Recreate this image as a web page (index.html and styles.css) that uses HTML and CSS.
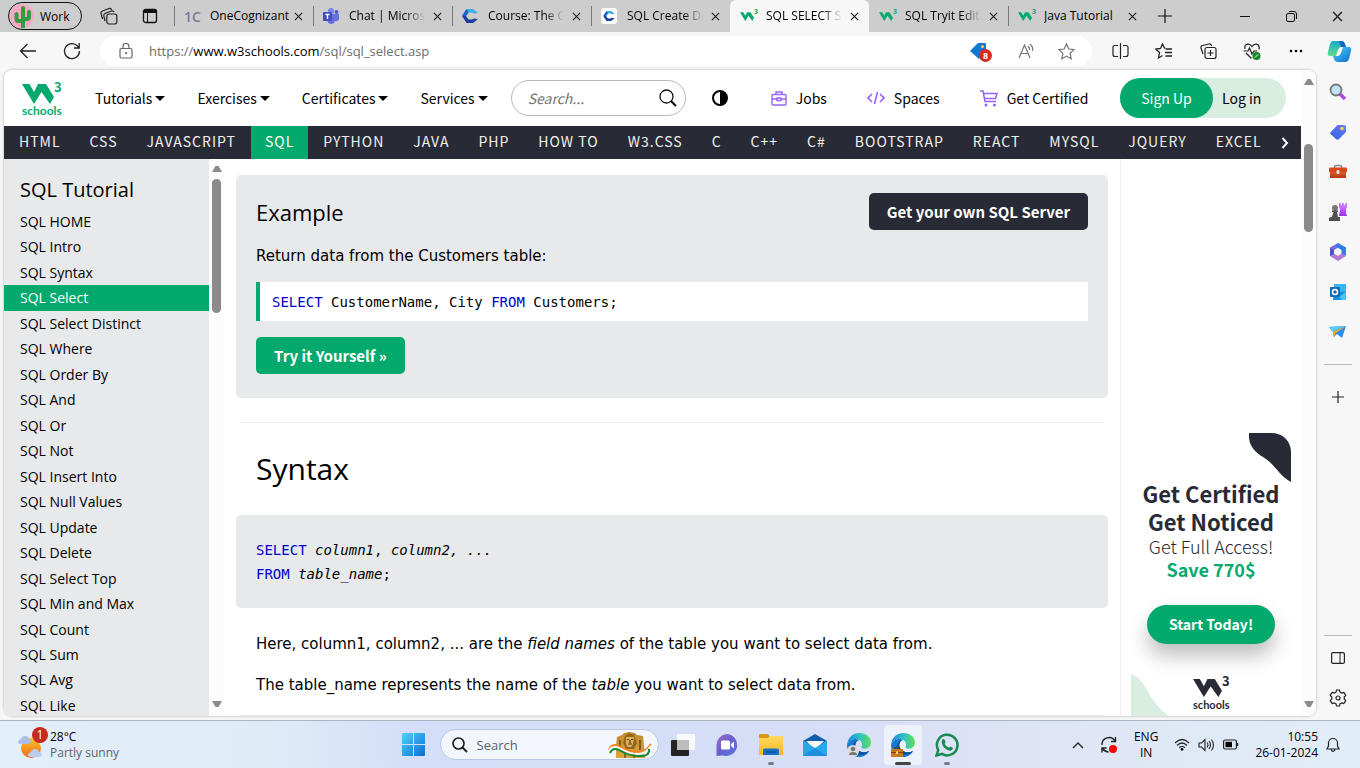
FILE: index.html
```html
<!DOCTYPE html>
<html lang="en">
<head>
<meta charset="utf-8">
<title>SQL SELECT Statement</title>
<link rel="stylesheet" href="styles.css">
</head>
<body>
<svg class="defs" aria-hidden="true">
  <defs>
    <linearGradient id="gBlue" x1="0" y1="0" x2="1" y2="1"><stop offset="0" stop-color="#4fd0ff"/><stop offset="1" stop-color="#0a6fd0"/></linearGradient>
    <linearGradient id="gEdge" x1="0" y1="0" x2="1" y2="0"><stop offset="0" stop-color="#1788d8"/><stop offset=".5" stop-color="#2cc0c8"/><stop offset="1" stop-color="#5fe05a"/></linearGradient>
    <linearGradient id="gPurple" x1="0" y1="0" x2="1" y2="1"><stop offset="0" stop-color="#9a6cc0"/><stop offset=".5" stop-color="#6a5fd0"/><stop offset="1" stop-color="#4f7fe0"/></linearGradient>
    <linearGradient id="gFolder" x1="0" y1="0" x2="0" y2="1"><stop offset="0" stop-color="#ffd95c"/><stop offset="1" stop-color="#f8b62a"/></linearGradient>
    <linearGradient id="gSun" x1="0" y1="0" x2="0" y2="1"><stop offset="0" stop-color="#fbc02d"/><stop offset="1" stop-color="#ef6c1a"/></linearGradient>
    <linearGradient id="gGold" x1="0" y1="0" x2="0" y2="1"><stop offset="0" stop-color="#c08a2c"/><stop offset="1" stop-color="#d9a93c"/></linearGradient>
    <linearGradient id="gTeal" x1="0" y1="0" x2="0" y2="1"><stop offset="0" stop-color="#17a8c9"/><stop offset="1" stop-color="#5fe08a"/></linearGradient>
    <linearGradient id="gTag" x1="0" y1="1" x2="1" y2="0"><stop offset="0" stop-color="#2f5fe0"/><stop offset="1" stop-color="#6d7dff"/></linearGradient>
    <linearGradient id="gViolet" x1="0" y1="0" x2="0" y2="1"><stop offset="0" stop-color="#d68cff"/><stop offset="1" stop-color="#a22ef5"/></linearGradient>
    <linearGradient id="gBox" x1="0" y1="0" x2="0" y2="1"><stop offset="0" stop-color="#e0592a"/><stop offset="1" stop-color="#b83814"/></linearGradient>
    <symbol id="w3mark" viewBox="0 0 32 20"><path d="M0 0H7.500L12 8 16 0H24L32 13 28 20 19.500 8 12 20Z"/></symbol>
    <symbol id="close" viewBox="0 0 10 10"><path d="M1 1 9 9M9 1 1 9" fill="none" stroke="#222" stroke-width="1.300"/></symbol>
    <symbol id="cogn" viewBox="0 0 16 14"><path d="M4.500 0H11L16 4 12 4.500 10 3.500H6.500L4 7 0 7Z" fill="#39b0e8"/><path d="M0 7H4L6.500 10.500H10L12 9.500 16 10 11 14H4.500Z" fill="#1d3f9c"/><path d="M0 7 4.500 0 6.500 3.500 4 7Z" fill="#1d5fc4"/></symbol>
    <symbol id="edge" viewBox="0 0 24 24"><path d="M0 12C1 4 6 0 12.500 0 19.500 0 24 4.500 24 9.500 24 14 20 16.500 16 15.500 13.500 15 15 13.500 15 11.500 15 8 12 6 8.500 6 4.500 6 1.500 8.500 0 12Z" fill="url(#gEdge)"/><path d="M0 12C1.500 8 5 6 8.500 6 10 6 11 6.300 12 7 8.500 8 7.500 12 9 15 11 19 17 20.500 22 18 20 22 16 24 12 24 5 24 0 18.500 0 12Z" fill="#1479cf"/><path d="M12 7C8.500 8 7.500 12 9 15 11 19 17 20.500 22 18 18 23 10 23 7 18 4 13 7 8 12 7Z" fill="#0c4f9b"/></symbol>
  </defs>
</svg>

<header class="tabstrip">
  <div class="strip-left">
    <button class="profile"><svg width="24" height="24" viewBox="0 0 24 24" aria-hidden="true"><circle cx="12" cy="12" r="12" fill="#f9a8c4"/><path d="M13 23V4M13 17H8Q6.500 17 6.500 15V10M13 15H17Q19 15 19 13V8" fill="none" stroke="#2f9e3f" stroke-width="4" stroke-linecap="round"/></svg>Work</button>
    <button class="plain" aria-label="Workspaces"><svg width="18" height="18" viewBox="0 0 18 18"><g fill="#cdcdcd" stroke="#222" stroke-width="1.200"><path d="M2.500 12 1 6.500Q.7 4.500 2.500 4L9 1.500Q11 1 11.500 3"/><path d="M5 14 3.800 9Q3.500 7 5.300 6.300L11.500 4Q13.500 3.500 14 5.200"/><rect x="6.800" y="7" width="10" height="10" rx="2.200"/></g></svg></button>
    <button class="plain" aria-label="Tab actions"><svg width="16" height="16" viewBox="0 0 16 16"><rect x="1.500" y="1.500" width="13" height="13" rx="2" fill="none" stroke="#111" stroke-width="1.300"/><path d="M1.500 2H14.500V5H1.500Z" fill="#111"/><path d="M5.500 5V14" stroke="#111"/></svg></button>
  </div>
  <nav class="tabs" aria-label="Tabs">
    <div class="tab whole"><span class="fav one">1C</span><a href="#">OneCognizant</a><button aria-label="Close"><svg width="9" height="9"><use href="#close"/></svg></button></div>
    <div class="tab"><span class="fav"><svg width="16" height="16" viewBox="0 0 16 16"><circle cx="8" cy="3" r="3" fill="#7b83eb"/><circle cx="13.500" cy="4" r="2" fill="#5059c9"/><path d="M4 6H16V11Q15 14 12 13 11 16 8 16 4 15.500 4 11Z" fill="#6670dd"/><rect y="4" width="9" height="9" rx="1" fill="#4450b8"/><path d="M2.500 6.500H6.500M4.500 6.500V11" stroke="#fff" stroke-width="1.300"/></svg></span><a href="#">Chat | Microsoft</a><button aria-label="Close"><svg width="9" height="9"><use href="#close"/></svg></button></div>
    <div class="tab"><span class="fav"><svg width="16" height="14"><use href="#cogn"/></svg></span><a href="#">Course: The Co</a><button aria-label="Close"><svg width="9" height="9"><use href="#close"/></svg></button></div>
    <div class="tab"><span class="fav boxed"><svg width="12" height="10"><use href="#cogn"/></svg></span><a href="#">SQL Create Def</a><button aria-label="Close"><svg width="9" height="9"><use href="#close"/></svg></button></div>
    <div class="tab active"><span class="fav green"><svg width="14" height="9"><use href="#w3mark"/></svg><sup>3</sup></span><a href="#">SQL SELECT Sta</a><button aria-label="Close"><svg width="9" height="9"><use href="#close"/></svg></button></div>
    <div class="tab"><span class="fav green"><svg width="14" height="9"><use href="#w3mark"/></svg><sup>3</sup></span><a href="#">SQL Tryit Editor</a><button aria-label="Close"><svg width="9" height="9"><use href="#close"/></svg></button></div>
    <div class="tab whole"><span class="fav green"><svg width="14" height="9"><use href="#w3mark"/></svg><sup>3</sup></span><a href="#">Java Tutorial</a><button aria-label="Close"><svg width="9" height="9"><use href="#close"/></svg></button></div>
    <button class="plain newtab" aria-label="New tab"><svg width="14" height="14" viewBox="0 0 14 14"><path d="M7 0V14M0 7H14" stroke="#111" stroke-width="1.200"/></svg></button>
  </nav>
  <div class="window-controls">
    <button class="plain" aria-label="Minimize"><svg width="10" height="10"><path d="M0 5.500H10" stroke="#111"/></svg></button>
    <button class="plain" aria-label="Restore"><svg width="11" height="11" viewBox="0 0 11 11"><rect x=".5" y="2.500" width="8" height="8" rx="1.500" fill="none" stroke="#111"/><path d="M3 .5H8Q10.500 .5 10.500 3V8" fill="none" stroke="#111"/></svg></button>
    <button class="plain" aria-label="Close window"><svg width="11" height="11"><use href="#close"/></svg></button>
  </div>
</header>

<div class="toolbar">
  <div class="history">
    <button class="plain" aria-label="Back"><svg width="18" height="16" viewBox="0 0 18 16"><path d="M17 8H1.500M8.500 1 1.500 8 8.500 15" fill="none" stroke="#222" stroke-width="1.300"/></svg></button>
    <button class="plain" aria-label="Refresh"><svg width="18" height="18" viewBox="0 0 18 18"><path d="M16.500 9A7.500 7.500 0 1 1 14.500 4L16 5.500M16.200 1V6H11" fill="none" stroke="#222" stroke-width="1.300"/></svg></button>
  </div>
  <div class="address">
    <svg width="14" height="16" viewBox="0 0 14 16" aria-hidden="true"><rect x="1" y="5.500" width="12" height="9.500" rx="1.500" fill="none" stroke="#666" stroke-width="1.200"/><path d="M4 5.500V3.500A3 3 0 0 1 10 3.500V5.500" fill="none" stroke="#666" stroke-width="1.200"/><circle cx="7" cy="10" r="1" fill="#555"/></svg>
    <div class="url" role="textbox" contenteditable="true" aria-label="Address" spellcheck="false">https://<b>www.w3schools.com</b>/sql/sql_select.asp</div>
    <button class="plain badge-host" aria-label="Shopping"><svg width="20" height="18" viewBox="0 0 20 18"><path d="M0 9 8 1H15Q16 1 16 2V9L9 17Z" fill="#0f78d4"/><circle cx="12.500" cy="4.500" r="1.500" fill="#ffd23c"/></svg><span class="badge">8</span></button>
    <button class="plain" aria-label="Read aloud"><svg width="17" height="16" viewBox="0 0 17 16"><path d="M1 15 6.500 2 12 15M3 10.500H10M10 3Q12 5 11.500 7M12 1Q15.500 4 14.500 8" fill="none" stroke="#777" stroke-width="1.200"/></svg></button>
    <button class="plain" aria-label="Favourite"><svg width="17" height="17" viewBox="0 0 17 17"><path d="M8.500 1 10.800 6 16 6.600 12.200 10.300 13.200 15.800 8.500 13.100 3.800 15.800 4.800 10.300 1 6.600 6.200 6Z" fill="none" stroke="#777" stroke-width="1.200"/></svg></button>
  </div>
  <div class="actions">
    <button class="plain" aria-label="Split screen"><svg width="17" height="16" viewBox="0 0 17 16"><path d="M6 2.500H3Q1 2.500 1 4.500V11.500Q1 13.500 3 13.500H6M11 2.500H14Q16 2.500 16 4.500V11.500Q16 13.500 14 13.500H11M8.500 0V16" fill="none" stroke="#222" stroke-width="1.200"/></svg></button>
    <button class="plain" aria-label="Favourites"><svg width="18" height="17" viewBox="0 0 18 17"><path d="M10 5.500 9.500 5 7.500 1 5.500 5.500 .8 6 4.500 9.500 3.500 15 7.500 12.500M10.500 6H17M10 9.500H17M10.500 13H17" fill="none" stroke="#222" stroke-width="1.300"/></svg></button>
    <button class="plain" aria-label="Collections"><svg width="17" height="17" viewBox="0 0 17 17"><path d="M3 11 1 5Q.5 3 2.500 2.500L9 1Q11 .5 11.500 3" fill="none" stroke="#222" stroke-width="1.200"/><rect x="5" y="4.500" width="11" height="11" rx="2" fill="none" stroke="#222" stroke-width="1.200"/><path d="M10.500 7V13M7.500 10H13.500" stroke="#222" stroke-width="1.200"/></svg></button>
    <button class="plain" aria-label="Browser essentials"><svg width="18" height="17" viewBox="0 0 18 17"><path d="M2 6Q1 2 4.500 1.200 7.500 1 9 3.500 10.500 1 13.500 1.200 17 2 16 6.500M3 10 8.500 15.500M.5 8H5L6.500 5 9 11 11 8H14" fill="none" stroke="#222" stroke-width="1.200"/><circle cx="13.500" cy="13" r="4" fill="#138a2c"/><path d="M12 14.500 15 11.500" fill="none" stroke="#fff"/></svg></button>
    <button class="plain" aria-label="More"><svg width="14" height="4"><circle cx="2" cy="2" r="1.300"/><circle cx="7" cy="2" r="1.300"/><circle cx="12" cy="2" r="1.300"/></svg></button>
    <button class="plain" aria-label="Copilot"><svg width="25" height="23" viewBox="0 0 25 23"><path d="M6 1H15Q17 1 18 4L19 7H14Q12 7 11 10L9 16H3Q0 16 1 12L3 4Q4 1 6 1Z" fill="url(#gTeal)"/><path d="M15 1Q17 1 18 4L19 7H14L12 1Z" fill="#1766c8"/><path d="M19 22H10Q8 22 7 19L6 16H11Q13 16 14 13L16 7H22Q25 7 24 11L22 19Q21 22 19 22Z" fill="url(#gBlue)"/></svg></button>
  </div>
</div>

<div class="middle">
  <main class="page">
    <div class="site">
      <header class="topnav">
        <a class="logo" href="#" aria-label="W3Schools"><span><svg width="32" height="20"><use href="#w3mark"/></svg><sup>3</sup></span><small>schools</small></a>
        <nav class="menus">
          <a href="#">Tutorials<i></i></a><a href="#">Exercises<i></i></a><a href="#">Certificates<i></i></a><a href="#">Services<i></i></a>
        </nav>
        <div class="search"><input type="search" placeholder="Search..." aria-label="Search W3Schools"><button class="plain" aria-label="Search"><svg width="18" height="18" viewBox="0 0 18 18"><circle cx="7.500" cy="7.500" r="6.500" fill="none" stroke="#111" stroke-width="1.300"/><path d="M12 12 17 17" stroke="#111" stroke-width="2.200"/></svg></button></div>
        <button class="plain" aria-label="Toggle dark mode"><svg width="16" height="16" viewBox="0 0 16 16"><circle cx="8" cy="8" r="7" fill="#fff" stroke="#000" stroke-width="2"/><path d="M8 1A7 7 0 0 1 8 15Z"/></svg></button>
        <nav class="extras">
          <a href="#"><svg width="16" height="15" viewBox="0 0 16 15"><g fill="none" stroke="#9763f6" stroke-width="1.400"><rect x="1" y="3.500" width="14" height="10.500" rx="1"/><path d="M5 3.500V1H11V3.500M1 8H6M10 8H15M6 7H10V9.500H6Z"/></g></svg>Jobs</a>
          <a href="#"><svg width="18" height="14" viewBox="0 0 18 14"><path d="M5 3 1 7 5 11M13 3 17 7 13 11M10.500 1 7.500 13" fill="none" stroke="#9763f6" stroke-width="1.600"/></svg>Spaces</a>
          <a href="#"><svg width="18" height="17" viewBox="0 0 18 17"><path d="M0 1H3L5 11.500H16M3.500 3.500H17L15.500 8.500H4.500" fill="none" stroke="#9763f6" stroke-width="1.500"/><circle cx="6" cy="15" r="1.500" fill="#9763f6"/><circle cx="14.500" cy="15" r="1.500" fill="#9763f6"/></svg>Get Certified</a>
        </nav>
        <div class="account"><a class="signup" href="#">Sign Up</a><a class="login" href="#">Log in</a></div>
      </header>
      <div class="subjects">
        <nav>
          <a href="#">HTML</a><a href="#">CSS</a><a href="#">JAVASCRIPT</a><a class="current" href="#">SQL</a><a href="#">PYTHON</a><a href="#">JAVA</a><a href="#">PHP</a><a href="#">HOW TO</a><a href="#">W3.CSS</a><a href="#">C</a><a href="#">C++</a><a href="#">C#</a><a href="#">BOOTSTRAP</a><a href="#">REACT</a><a href="#">MYSQL</a><a href="#">JQUERY</a><a href="#">EXCEL</a>
        </nav>
        <button class="plain" aria-label="Scroll right"><svg width="8" height="12" viewBox="0 0 8 12"><path d="M1.500 1 6 6 1.500 11" fill="none" stroke="#fff" stroke-width="2"/></svg></button>
      </div>
      <div class="columns">
        <aside class="chapters">
          <h2>SQL Tutorial</h2>
          <nav>
            <a href="#">SQL HOME</a><a href="#">SQL Intro</a><a href="#">SQL Syntax</a><a class="current" href="#">SQL Select</a><a href="#">SQL Select Distinct</a><a href="#">SQL Where</a><a href="#">SQL Order By</a><a href="#">SQL And</a><a href="#">SQL Or</a><a href="#">SQL Not</a><a href="#">SQL Insert Into</a><a href="#">SQL Null Values</a><a href="#">SQL Update</a><a href="#">SQL Delete</a><a href="#">SQL Select Top</a><a href="#">SQL Min and Max</a><a href="#">SQL Count</a><a href="#">SQL Sum</a><a href="#">SQL Avg</a><a href="#">SQL Like</a>
          </nav>
        </aside>
        <div class="scrollbar inner"><svg width="10" height="8"><path d="M0 7 3.500 1H6.500L10 7Z"/></svg><span class="track"><span class="thumb"></span></span><svg width="10" height="8"><path d="M0 1 3.500 7H6.500L10 1Z"/></svg></div>
        <article class="lesson">
          <section class="panel">
            <div class="panel-head"><h3>Example</h3><a class="server" href="#">Get your own SQL Server</a></div>
            <p>Return data from the Customers table:</p>
            <pre class="code"><b>SELECT</b> CustomerName, City <b>FROM</b> Customers;</pre>
            <a class="try" href="#">Try it Yourself »</a>
          </section>
          <hr>
          <h2>Syntax</h2>
          <section class="panel syntax"><pre><b>SELECT</b> <em>column1</em>, <em>column2, ...</em>
<b>FROM</b> <em>table_name</em>;</pre></section>
          <p>Here, column1, column2, ... are the <em>field names</em> of the table you want to select data from.</p>
          <p>The table_name represents the name of the <em>table</em> you want to select data from.</p>
          <hr class="last">
        </article>
        <aside class="promo">
          <div class="card">
            <svg class="leaf" width="42" height="49" viewBox="0 0 42 49" aria-hidden="true"><path d="M0 0H22C34 0 42 8 42 19V49C30 43 27 32 14 24 5 18-1 12 0 0Z" fill="#282a35"/></svg>
            <strong>Get Certified<br>Get Noticed</strong>
            <span class="full">Get Full Access!</span>
            <b class="save">Save 770$</b>
            <a class="start" href="#">Start Today!</a>
            <div class="logo dark"><span><svg width="29" height="20" viewBox="0 0 32 20"><use href="#w3mark"/></svg><sup>3</sup></span><small>schools</small></div>
            <svg class="wave" width="40" height="44" viewBox="0 0 40 44" aria-hidden="true"><path d="M0 2C17 8 16 29 38 44H0Z" fill="#d9eee1"/></svg>
          </div>
        </aside>
      </div>
    </div>
    <div class="scrollbar outer"><svg width="10" height="8"><path d="M0 7 3.500 1H6.500L10 7Z"/></svg><span class="track"><span class="thumb"></span></span><svg width="10" height="8"><path d="M0 1 3.500 7H6.500L10 1Z"/></svg></div>
  </main>
  <aside class="edgebar">
    <button class="plain" aria-label="Search"><svg width="18" height="18" viewBox="0 0 18 18"><path d="M11 11 16 16" stroke="#b446e8" stroke-width="3.500"/><circle cx="7" cy="7" r="5.500" fill="#bfe4f6" stroke="#777" stroke-width="1.800"/></svg></button>
    <button class="plain" aria-label="Shopping"><svg width="18" height="18" viewBox="0 0 18 18"><path d="M1 10 8.500 2H15Q17 2 17 4V9L10 16Q8.500 17.500 7 16L1.500 11Z" fill="url(#gTag)"/><circle cx="13" cy="5.500" r="1.800" fill="#ffd23c"/></svg></button>
    <button class="plain" aria-label="Tools"><svg width="18" height="18" viewBox="0 0 18 18"><path d="M5.500 5V3.500Q5.500 2.500 7 2.500H11Q12.500 2.500 12.500 3.500V5" fill="none" stroke="#888" stroke-width="1.500"/><rect y="4.500" width="18" height="5" rx="1" fill="#d8481b"/><path d="M1 9H17V15H1Z" fill="url(#gBox)"/><rect x="7.500" y="7" width="3" height="4" rx="1" fill="#ddd"/></svg></button>
    <button class="plain" aria-label="Games"><svg width="18" height="18" viewBox="0 0 18 18"><path d="M10 0H12V2H13V0H15V2H16V0H18V4L17 6V10L18 13H10L11 6 10 4Z" fill="url(#gViolet)"/><circle cx="6" cy="5" r="3" fill="#777"/><path d="M3 7.500H9V9H8L9 14H11V18H0V15L3 13.500 4.500 9H3Z" fill="#505050"/></svg></button>
    <button class="plain" aria-label="Microsoft 365"><svg width="18" height="18" viewBox="0 0 18 18"><path d="M9 0 1 4.500V13L5 11V7L12 3Z" fill="#7a6ce0"/><path d="M9 0 17 4.500V13L12.500 11V7L7 3.500Z" fill="#2f7fe8"/><path d="M1 13 9 18 17 13 12.500 10.500 9 13 5 10.500Z" fill="#b27ad8"/><path d="M5 7V11L1 13V5Z" fill="#4b55c8"/></svg></button>
    <button class="plain" aria-label="Outlook"><svg width="18" height="18" viewBox="0 0 18 18"><rect x="5" y="1" width="12" height="11" fill="#35b7f1"/><path d="M5 8 17 9V17H4Z" fill="#1490df"/><path d="M10 14 17 9V17H13Z" fill="#45c5f3"/><rect x="1" y="4" width="10" height="10" rx="1" fill="#0f6cbd"/><circle cx="6" cy="9" r="2.500" fill="none" stroke="#fff" stroke-width="1.500"/></svg></button>
    <button class="plain" aria-label="Drop"><svg width="18" height="18" viewBox="0 0 18 18"><path d="M0 4 17 3 13 15 8 11 5 14 4 9Z" fill="#2a8df0"/><path d="M0 4 17 3 4 9Z" fill="#59c8f5"/><path d="M17 3 4 9 5 14 7 10Z" fill="#f5a51c"/></svg></button>
    <hr>
    <button class="plain" aria-label="Customize"><svg width="12" height="12"><path d="M6 0V12M0 6H12" stroke="#222" stroke-width="1.200"/></svg></button>
    <span class="spacer"></span>
    <hr>
    <button class="plain" aria-label="Hide sidebar"><svg width="14" height="12" viewBox="0 0 14 12"><rect x=".6" y=".6" width="12.800" height="10.800" rx="1.500" fill="none" stroke="#222" stroke-width="1.200"/><path d="M9 .5V11.500" stroke="#222"/></svg></button>
    <button class="plain" aria-label="Settings"><svg width="18" height="18" viewBox="0 0 18 18"><path d="M7.500 1H10.500L11 3.200 12.600 4.100 14.800 3.400 16.800 6.400 15.200 8 15.200 10 16.800 11.600 14.800 14.600 12.600 13.900 11 14.800 10.500 17H7.500L7 14.800 5.400 13.900 3.200 14.600 1.200 11.600 2.800 10V8L1.200 6.400 3.200 3.400 5.400 4.100 7 3.200Z" fill="none" stroke="#222" stroke-width="1.200" stroke-linejoin="round"/><circle cx="9" cy="9" r="2" fill="none" stroke="#222" stroke-width="1.200"/></svg></button>
  </aside>
</div>

<footer class="taskbar">
  <div class="side">
    <button class="weather"><span class="badge-host"><svg width="26" height="28" viewBox="0 0 26 28"><circle cx="13" cy="17" r="10" fill="url(#gSun)"/><path d="M3 13Q0 13 0 10.500 1 8 3 8 4 5 7 5 10 5 11 8 13 9 13 11 12 13 10 13Z" fill="#a9bfea"/><path d="M13 26Q10 26 10 23.500 11 21 13 21.500 14 18 17 18 20 18 21 21 24 21.500 24 24 23 26 21 26Z" fill="#bccdf2"/></svg><span class="badge big">1</span></span><span class="weather-text"><span>28°C</span><span class="muted">Partly sunny</span></span></button>
  </div>
  <div class="apps">
    <button class="app" aria-label="Start"><svg width="24" height="24" viewBox="0 0 24 24" fill="url(#gBlue)"><path d="M0 1Q0 0 1 0H11V11H0ZM12 0H22Q23 0 23 1V11H12ZM0 12H11V23H1Q0 23 0 22ZM12 12H23V22Q23 23 22 23H12Z"/></svg></button>
    <label class="tasksearch"><svg width="16" height="16" viewBox="0 0 16 16"><circle cx="6.500" cy="6.500" r="5.500" fill="none" stroke="#222" stroke-width="1.700"/><path d="M10.500 10.500 15 15" stroke="#222" stroke-width="2"/></svg><input type="text" placeholder="Search" aria-label="Search taskbar"><svg width="44" height="28" viewBox="0 0 44 28"><path d="M8 27 8 14 9 6 14 4 16 2 21 1 27 2 29 4 35 5 36 14 37 27Z" fill="url(#gGold)"/><path d="M17 5 15 12 18 18H26L29 12 26 4 21 2Z" fill="#96651f"/><path d="M18 6H26L25 13 23 16H20L18 13Z" fill="#dfb456"/><path d="M19 8.500H21M23 8.500H25M20 13H24M22 9V12M12 9V19M32 9V19M17 20V27M26 21V27" stroke="#533610" stroke-width="1.200"/><path d="M1 19Q4 11 13 16T30 21 43 13" fill="none" stroke="#f58220" stroke-width="2"/><path d="M1 20.500Q4 13 13 18T30 23 43 15" fill="none" stroke="#fff" stroke-width="2"/><path d="M2 22Q5 15 13 20T30 25Q42 26 41 18" fill="none" stroke="#168b3c" stroke-width="2"/></svg></label>
    <button class="app" aria-label="Task view"><svg width="24" height="24" viewBox="0 0 24 24"><rect y="7" width="18" height="16" rx="1" fill="#242424"/><rect x="6" y="1" width="18" height="16" rx="1" fill="#fafafa"/><rect x="6" y="7" width="12" height="10" fill="#bcbcbc"/></svg></button>
    <button class="app" aria-label="Chat"><svg width="24" height="24" viewBox="0 0 24 24"><path d="M12 1A11 11 0 1 1 8 22.500L1.500 23V12A11 11 0 0 1 12 1Z" fill="url(#gPurple)"/><rect x="6" y="7.500" width="9" height="9" rx="1.500" fill="#fff"/><path d="M16 11 19 8.500V15.500L16 13Z" fill="#fff"/></svg></button>
    <button class="app running" aria-label="File Explorer"><svg width="24" height="24" viewBox="0 0 24 24"><path d="M0 2Q0 1 1 1H9L11 4V8H0Z" fill="#dc9615"/><path d="M0 5H9L11 3H23Q24 3 24 4V22H0Z" fill="url(#gFolder)"/><path d="M4 22V17Q4 15.500 6 15.500H18Q20 15.500 20 17V22Z" fill="#1273c4"/><path d="M7 19H17" stroke="#0c4f94" stroke-width="1.500"/></svg></button>
    <button class="app" aria-label="Mail"><svg width="24" height="24" viewBox="0 0 24 24"><path d="M0 8 12 1 24 8 12 16Z" fill="#0f5daf"/><path d="M3 8H21L12 17Z" fill="#f7f7f7"/><path d="M0 7.500 12 15 24 7.500V23H0Z" fill="#2aa7ea"/><path d="M12 15 24 23H0Z" fill="#1b8fdb"/></svg></button>
    <button class="app" aria-label="Edge personal"><svg width="24" height="24" viewBox="0 0 24 24"><use href="#edge"/><circle cx="6" cy="18" r="6" fill="#ddd"/><circle cx="6" cy="16" r="2.300" fill="#777"/><path d="M2 22Q2 19 6 19 10 19 10 22Z" fill="#777"/></svg></button>
    <button class="app active" aria-label="Edge work"><svg width="24" height="24" viewBox="0 0 24 24"><use href="#edge"/><path d="M4 16V14.500H8V16" fill="none" stroke="#5a3a10" stroke-width="1.200"/><rect y="16" width="12" height="8" fill="#c77818"/><path d="M0 19.500H12" stroke="#7d4508"/><rect x="5" y="18.500" width="2" height="2.500" fill="#ffd86a"/></svg></button>
    <button class="app running" aria-label="WhatsApp"><svg width="24" height="24" viewBox="0 0 24 24"><path d="M1.500 22.500 3.200 17A10.300 10.300 0 1 1 7 20.900Z" fill="none" stroke="#178a50" stroke-width="2.500"/><path d="M7 7Q8 5.500 9.500 6.500L10.500 9Q10.500 10 9.500 10.800 11 13.500 14 14.800L15.500 13.500 18 15Q18 17 15.500 17.800 12.500 18 9 14.500 6 10.500 7 7Z" fill="#178a50"/></svg></button>
  </div>
  <div class="side tray">
    <button class="plain" aria-label="Hidden icons"><svg width="12" height="8"><path d="M1 7 6 2 11 7" fill="none" stroke="#222" stroke-width="1.400"/></svg></button>
    <button class="plain" aria-label="Update"><svg width="18" height="18" viewBox="0 0 18 18"><path d="M2 9A7 7 0 0 1 15 5M15.500 1V5.500H11M2 16.500V12H6.500M2.500 12.500Q5 16 8.500 16" fill="none" stroke="#222" stroke-width="1.400"/><circle cx="13" cy="13" r="4" fill="#f00"/></svg></button>
    <button class="plain lang"><span>ENG</span><span>IN</span></button>
    <button class="plain status" aria-label="Network, volume and battery">
      <svg width="16" height="13" viewBox="0 0 16 13"><path d="M1 5Q8-2 15 5M3 7.500Q8 2.500 13 7.500M5.200 9.700Q8 7 10.800 9.700" fill="none" stroke="#222" stroke-width="1.200"/><circle cx="8" cy="11.300" r="1.400"/></svg>
      <svg width="17" height="14" viewBox="0 0 17 14"><path d="M1 5H3.500L7 1.500V12.500L3.500 9H1ZM9 4.500Q11 7 9 9.500M11 3Q14 7 11 11M13.500 1.500Q17.500 7 13.500 12.500" fill="none" stroke="#222" stroke-width="1.100"/></svg>
      <svg width="16" height="11" viewBox="0 0 16 11"><rect x=".6" y="1" width="12.800" height="9" rx="1.500" fill="none" stroke="#222" stroke-width="1.200"/><rect x="2.500" y="2.800" width="6.500" height="5.400"/><path d="M14.500 4V7" stroke="#222" stroke-width="1.500"/></svg>
    </button>
    <button class="plain clock"><span>10:55</span><span>26-01-2024</span></button>
    <button class="plain" aria-label="Notifications"><svg width="14" height="16" viewBox="0 0 14 16"><path d="M1 12 2.500 9V6A4.500 4.500 0 0 1 11.500 6V9L13 12ZM5 12.500Q7 16.500 9 12.500" fill="none" stroke="#222" stroke-width="1.200"/></svg></button>
  </div>
</footer>
</body>
</html>
```
FILE: styles.css
```css
* { box-sizing: border-box; }
html, body { height: 100%; }
body {
  margin: 0;
  display: flex;
  flex-direction: column;
  overflow: hidden;
  background: #f7f7f7;
  color: #000;
  font-family: "Open Sans", "Noto Sans", sans-serif;
  font-size: 12px;
}
a { color: inherit; text-decoration: none; }
button { font: inherit; color: inherit; cursor: pointer; }
svg { display: block; flex: none; }
.defs { position: absolute; width: 0; height: 0; }
.plain {
  display: flex;
  align-items: center;
  justify-content: center;
  padding: 0;
  border: 0;
  background: none;
}

/* Tab strip */
.tabstrip { display: flex; height: 32px; flex: none; background: #cdcdcd; }
.strip-left { display: flex; align-items: center; width: 174px; padding-left: 8px; gap: 18px; }
.profile {
  display: flex;
  align-items: center;
  gap: 6px;
  width: 74px;
  height: 28px;
  padding: 0 1px;
  border: 1px solid #111;
  border-radius: 14px;
  background: none;
}
.strip-left .plain + .plain { margin-left: 6px; }
.tabs { display: flex; flex: 1; min-width: 0; }
.tab {
  display: flex;
  align-items: center;
  flex: 0 1 139px;
  min-width: 0;
  padding: 0 10px;
  gap: 10px;
  background: linear-gradient(#777, #777) left center / 1px 20px no-repeat;
}
.tab a {
  flex: 1;
  min-width: 0;
  margin-right: -6px;
  overflow: hidden;
  white-space: nowrap;
  line-height: 20px;
  mask-image: linear-gradient(90deg, #000 70%, transparent 95%);
}
.tab.whole a { mask-image: none; }
.tab button { display: flex; padding: 0; border: 0; background: none; }
.tab.active { background: #f7f7f7; border-radius: 6px 6px 0 0; }
.tab.active + .tab { background: none; }
.fav { display: flex; width: 16px; height: 16px; align-items: center; flex: none; }
.one { color: #7b7b94; font-size: 14px; font-weight: 600; }
.boxed { justify-content: center; background: #fff; border-radius: 3px; }
.green { color: #04aa6d; fill: #04aa6d; }
.green sup { align-self: flex-start; font-size: 7px; line-height: 8px; font-weight: 700; }
.newtab { width: 36px; }
.window-controls { display: flex; }
.window-controls .plain { width: 46px; }

/* Toolbar */
.toolbar { display: flex; align-items: center; flex: none; height: 38px; background: #f7f7f7; }
.history { display: flex; width: 100px; padding-left: 6px; }
.history .plain { width: 44px; height: 30px; }
.address {
  display: flex;
  align-items: center;
  flex: 1;
  min-width: 0;
  height: 30px;
  padding: 0 6px 0 19px;
  border-radius: 15px;
  background: #fff;
}
.url { flex: 1; padding-left: 16px; font-size: 13px; color: #6d6d6d; white-space: nowrap; overflow: hidden; outline: 0; }
.url b { font-weight: 400; color: #000; }
.address .plain { width: 40px; height: 30px; }
.address .badge-host { margin-right: 6px; }
.badge-host { position: relative; }
.badge {
  position: absolute;
  right: 8px;
  bottom: 4px;
  width: 13px;
  height: 13px;
  border-radius: 50%;
  background: #d92c20;
  color: #fff;
  font-size: 9px;
  font-weight: 700;
  line-height: 13px;
  text-align: center;
}
.badge.big { right: -4px; bottom: auto; top: -4px; width: 16px; height: 16px; background: #c42b1c; font-size: 12px; font-weight: 400; line-height: 16px; }
.actions { display: flex; padding-left: 6px; }
.actions .plain { width: 44px; height: 30px; }
.actions .plain:last-child { width: 42px; }

/* Viewport and side bar */
.middle { display: flex; flex: 1; min-height: 0; padding: 0 0 4px 4px; }
.page {
  display: flex;
  flex: 1;
  min-width: 0;
  overflow: hidden;
  border-radius: 8px;
  background: #fff;
  box-shadow: 0 0 2px 1px #d4d4d4;
}
.site { display: flex; flex-direction: column; flex: 1; min-width: 0; font-family: "Noto Sans CJK SC", sans-serif; }
.edgebar { display: flex; flex-direction: column; align-items: center; width: 44px; margin-bottom: -2px; padding-top: 2px; }
.edgebar .plain { width: 40px; height: 40px; flex: none; }
.edgebar hr { width: 28px; margin: 12px 0; border: 0; border-top: 1px solid #bbb; }
.edgebar .spacer { flex: 1; }
.edgebar .spacer + hr { margin: 0 0 2px; }
.scrollbar {
  display: flex;
  flex-direction: column;
  align-items: center;
  flex: none;
  width: 15px;
  padding: 6px 0 8px;
  gap: 6px;
  background: #fcfcfc;
  fill: #8b8b8b;
}
.track { flex: 1; width: 9px; }
.thumb { display: block; height: 134px; border-radius: 5px; background: #8b8b8b; }
.outer { padding-top: 8px; }
.outer .thumb { height: 88px; margin-top: 52px; }

/* Site header */
.topnav { display: flex; align-items: center; flex: none; height: 56px; padding: 0 15px 0 18px; font-size: 14px; white-space: nowrap; }
.logo { display: flex; flex-direction: column; width: 42px; color: #04aa6d; fill: #04aa6d; }
.logo span { display: flex; align-items: flex-end; height: 24px; }
.logo sup { align-self: flex-start; font-size: 13px; line-height: 13px; font-weight: 700; }
.logo small { font-family: Lato, sans-serif; font-size: 12px; line-height: 13px; font-weight: 700; }
.menus { display: flex; gap: 32px; margin-left: 31px; }
.menus a { display: flex; align-items: center; gap: 3px; }
.menus i { border: 5px solid transparent; border-top-color: #000; border-bottom: 0; }
.search {
  display: flex;
  align-items: center;
  width: 175px;
  height: 36px;
  margin: 0 26px 0 23px;
  padding: 0 8px 0 16px;
  border: 1px solid #b8b8b8;
  border-radius: 18px;
}
.search input { flex: 1; min-width: 0; padding: 0; border: 0; outline: 0; background: none; font: italic 14px "Noto Sans CJK SC", sans-serif; }
.search input::placeholder { color: #757575; }
.extras { display: flex; gap: 40px; margin-left: 43px; }
.extras a { display: flex; align-items: center; gap: 9px; }
.account { display: flex; height: 40px; margin-left: auto; line-height: 40px; width: 166px; border-radius: 20px; background: #d9eee1; }
.signup { width: 93px; border-radius: 20px; background: #04aa6d; color: #fff; text-align: center; }
.login { padding-left: 9px; }
.subjects { display: flex; flex: none; height: 33px; background: #282a35; color: #f1f1f1; }
.subjects nav { display: flex; flex: 1; gap: 1px; min-width: 0; padding-left: 1px; overflow: hidden; }
.subjects a { padding: 0 14px 2px; font-size: 14px; line-height: 31px; letter-spacing: 1px; white-space: nowrap; }
.subjects .current { background: #04aa6d; color: #fff; }
.subjects .plain { width: 32px; }

/* Page columns */
.columns { display: flex; flex: 1; min-height: 0; }
.chapters { flex: none; width: 205px; overflow: hidden; background: #e7e9eb; font-family: "Open Sans", sans-serif; }
.chapters h2 { margin: 16px 16px 5px; font-size: 20px; line-height: 29px; font-weight: 400; }
.chapters a { display: block; padding-left: 16px; font-size: 14px; line-height: 1.82; }
.chapters .current { background: #04aa6d; color: #fff; }
.lesson { flex: 1; min-width: 0; overflow: hidden; padding: 16px 12px 0; font-family: "DejaVu Sans", sans-serif; font-size: 15px; line-height: 23px; }
.lesson h2, .lesson h3 { margin: 0; font-family: "Open Sans", sans-serif; font-weight: 400; }
.lesson h2 { margin: 24px 20px; font-size: 30px; line-height: 44px; }
.lesson h3 { font-size: 22px; line-height: 38px; }
.lesson p { margin: 18px 20px; }
.lesson hr { margin: 24px 4px; border: 0; border-top: 1px solid #eee; }
.panel { padding: 18px 20px 24px; border-radius: 5px; background: #e7e9eb; }
.panel-head { display: flex; justify-content: space-between; align-items: flex-start; }
.panel p { margin: 14px 0; }
.server, .try { display: inline-block; padding: 0 18px; border-radius: 5px; font: 700 15px/37px "Noto Sans CJK SC", sans-serif; color: #fff; background: #282a35; }
.try { background: #04aa6d; }
pre { margin: 0; font-family: "DejaVu Sans Mono", monospace; font-size: 14px; line-height: 24px; }
pre b { font-weight: 400; color: #0000cd; }
.code { margin-bottom: 16px; padding: 8px 12px 7px; border-left: 4px solid #04aa6d; background: #fff; }
.syntax { padding: 23px 20px 22px; }
.lesson .syntax + p { margin-top: 25px; }
.lesson .last { margin: 18px 4px 0; }
.promo { display: flex; flex: none; width: 181px; padding: 0 10px; border-left: 1px solid #eee; overflow: hidden; }
.card { display: flex; flex-direction: column; align-items: center; flex: 1; position: relative; margin-top: 274px; color: #282a35; }
.leaf { align-self: flex-end; }
.card strong { margin-top: -3px; font-size: 22px; line-height: 28px; text-align: center; white-space: nowrap; }
.full { font-weight: 300; font-size: 18px; line-height: 23px; }
.save { font-size: 18px; line-height: 23px; color: #04aa6d; }
.start { margin-top: 24px; padding: 0 22px; border-radius: 20px; background: #04aa6d; color: #fff; font-size: 14px; font-weight: 700; line-height: 39px; box-shadow: 0 12px 20px rgba(0, 0, 0, 0.25); }
.logo.dark { width: 36px; margin-top: 30px; color: #282a35; fill: #282a35; }
.dark small { font-size: 11px; }
.wave { position: absolute; left: 0; bottom: 0; }

/* Taskbar */
.taskbar {
  display: flex;
  align-items: center;
  flex: none;
  height: 48px;
  border-top: 1px solid #aab4c3;
  background: linear-gradient(90deg, #e2eef8 0%, #e0ebf8 20%, #d3dff8 30%, #d7def7 60%, #dfe6f5 80%, #e1edf8 100%);
}
.side { display: flex; flex: 1; align-items: center; min-width: 0; padding-right: 20px; }
.weather { display: flex; align-items: center; gap: 6px; padding: 0 0 0 18px; border: 0; background: none; text-align: left; line-height: 16px; }
.weather-text { display: flex; flex-direction: column; }
.muted { color: #5c6470; }
.apps { display: flex; align-items: center; }
.app { display: flex; align-items: center; justify-content: center; position: relative; width: 44px; height: 40px; padding: 0; border: 0; border-radius: 4px; background: none; }
.app.active { width: 38px; margin: 0 3px; background: #edf1fb; }
.running::after, .app.active::after { content: ""; position: absolute; bottom: 0; width: 6px; height: 3px; border-radius: 2px; background: #777d88; }
.app.active::after { width: 16px; background: #444; }
.tasksearch { display: flex; align-items: center; width: 219px; height: 31px; margin: 0 2px 0 4px; padding: 0 6px 0 11px; border: 1px solid #bcc9e6; border-radius: 16px; background: #f3f6fd; }
.tasksearch input { flex: 1; min-width: 0; padding: 0 0 0 9px; border: 0; outline: 0; background: none; font: 13px "Open Sans", sans-serif; }
.tasksearch input::placeholder { color: #5c6068; }
.tray { justify-content: flex-end; gap: 16px; line-height: 16px; }
.lang, .clock { flex-direction: column; }
.clock { align-items: flex-end; }
.status { gap: 8px; }
.tray .clock + .plain { margin-left: -8px; }
```
